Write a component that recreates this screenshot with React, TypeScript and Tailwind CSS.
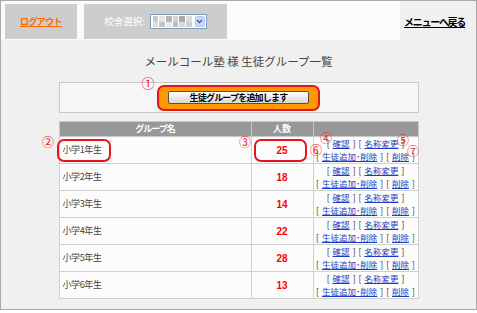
import React from "react";

const groups = [
	{ name: "小学1年生", count: 25 },
	{ name: "小学2年生", count: 18 },
	{ name: "小学3年生", count: 14 },
	{ name: "小学4年生", count: 22 },
	{ name: "小学5年生", count: 28 },
	{ name: "小学6年生", count: 13 },
];

const mosaic = [
	"bg-[#c9c9c9]", "bg-[#e4e4e4]", "bg-[#b4b4b4]", "bg-[#d2d2d2]", "bg-[#a9a9a9]", "bg-[#dcdcdc]",
	"bg-[#dedede]", "bg-[#c4c4c4]", "bg-[#e9e9e9]", "bg-[#bdbdbd]", "bg-[#d9d9d9]", "bg-[#cfcfcf]",
];

const Bracket = ({ children }: { children: React.ReactNode }) => (
	<span className="whitespace-nowrap">
		[<a href="#" className="mx-[3px] text-[#1a3cc0] underline">{children}</a>]
	</span>
);

const Mark = ({ className, children }: { className: string; children: React.ReactNode }) => (
	<span className={`absolute h-[14px] w-[14px] text-center text-[12px] leading-[14px] text-[#e8141c] ${className}`}>
		{children}
	</span>
);

export default function App() {
	return (
		<div className="relative h-[310px] w-[477px] border border-[#a9a9a9] bg-[#f0f0f0] font-['Noto_Sans_CJK_JP',sans-serif] text-[#333]">
			{/* header */}
			<header className="flex h-[39px]">
				<div className="flex w-[399px] gap-[7px] bg-[#fbfbfb] pl-[4px] pt-[3px]">
					<div className="flex h-[35px] w-[72px] items-center justify-center bg-[#cdcdcd]">
						<a href="#" className="text-[9px] font-bold tracking-[-0.6px] text-[#ff6a00] underline">ログアウト</a>
					</div>
					<div className="flex h-[35px] w-[143px] items-center justify-center gap-[5px] bg-[#cdcdcd]">
						<span className="text-[9.5px] text-white">校舎選択:</span>
						<div className="flex h-[15px] w-[57px] border border-[#7f9db9] bg-white">
							<div className="grid flex-1 grid-cols-6 grid-rows-2 gap-x-[1px] px-[2px] py-[1px]">
								{mosaic.map((c, i) => (
									<span key={i} className={c} />
								))}
							</div>
							<div className="m-[1px] flex w-[10px] items-center justify-center rounded-[2px] border border-[#b4c8f5] bg-[#c8d8fb]">
								<svg width="7" height="5" viewBox="0 0 7 5">
									<path d="M1 1 L3.5 3.5 L6 1" fill="none" stroke="#4d6185" strokeWidth="1.5" />
								</svg>
							</div>
						</div>
					</div>
				</div>
				<div className="flex flex-1 items-center justify-end pr-[11px] pt-[2px]">
					<a href="#" className="text-[10px] font-bold tracking-[-1.3px] text-black underline">メニューへ戻る</a>
				</div>
			</header>

			<h1 className="mt-[14px] text-center text-[11.5px] leading-[14px] text-[#444]">
				メールコール塾 様 生徒グループ一覧
			</h1>

			<div className="mx-auto mt-[14px] flex h-[31px] w-[360px] items-center justify-center border border-[#c8c8c8] bg-[#f6f6f6]">
				<div className="flex h-[26px] w-[163px] items-center justify-center rounded-[7px] border-2 border-[#e8141c] bg-[#ff9900]">
					<button className="h-[13px] w-[141px] rounded-[2px] border border-[#505050] bg-linear-to-b from-white to-[#d8d8d8] text-[9px] font-bold leading-[11px] tracking-[-0.8px] text-black">
						生徒グループを追加します
					</button>
				</div>
			</div>

			<table className="mx-auto mt-[8px] w-[360px] table-fixed border-collapse bg-[#fcfcfc] text-[9px]">
				<colgroup>
					<col className="w-[192px]" />
					<col className="w-[62px]" />
					<col />
				</colgroup>
				<thead>
					<tr className="h-[15px] bg-[#989898] text-white">
						<th className="border border-[#c8c8c8] font-bold tracking-[-1px]">グループ名</th>
						<th className="border border-[#c8c8c8] font-bold">人数</th>
						<th className="border border-[#c8c8c8]" />
					</tr>
				</thead>
				<tbody>
					{groups.map((g) => (
						<tr key={g.name} className="h-[26.5px]">
							<td className="border border-[#d0d0d0] pl-[3px] tracking-[-0.4px] text-[#444]">{g.name}</td>
							<td className="border border-[#d0d0d0] text-center font-['Liberation_Sans',sans-serif] text-[10px] font-bold text-[#f00]">
								{g.count}
							</td>
							<td className="border border-[#d0d0d0] text-center text-[8.5px] leading-[13px] text-[#333]">
								<div>
									<Bracket>確認</Bracket>
									<span className="ml-[3px]" />
									<Bracket>名称変更</Bracket>
								</div>
								<div>
									<Bracket>生徒追加･削除</Bracket>
									<span className="ml-[3px]" />
									<Bracket>削除</Bracket>
								</div>
							</td>
						</tr>
					))}
				</tbody>
			</table>

			{/* annotations */}
			<span className="absolute left-[56px] top-[138px] h-[23px] w-[54px] rounded-[7px] border-2 border-[#e8141c]" />
			<span className="absolute left-[253px] top-[138px] h-[23px] w-[53px] rounded-[7px] border-2 border-[#e8141c]" />
			<Mark className="left-[140px] top-[75px] text-[13px]">①</Mark>
			<Mark className="left-[40px] top-[134px]">②</Mark>
			<Mark className="left-[237px] top-[134px]">③</Mark>
			<Mark className="left-[318px] top-[130px]">④</Mark>
			<Mark className="left-[395px] top-[132px]">⑤</Mark>
			<Mark className="left-[308px] top-[142px]">⑥</Mark>
			<Mark className="left-[405px] top-[143px]">⑦</Mark>
		</div>
	);
}
